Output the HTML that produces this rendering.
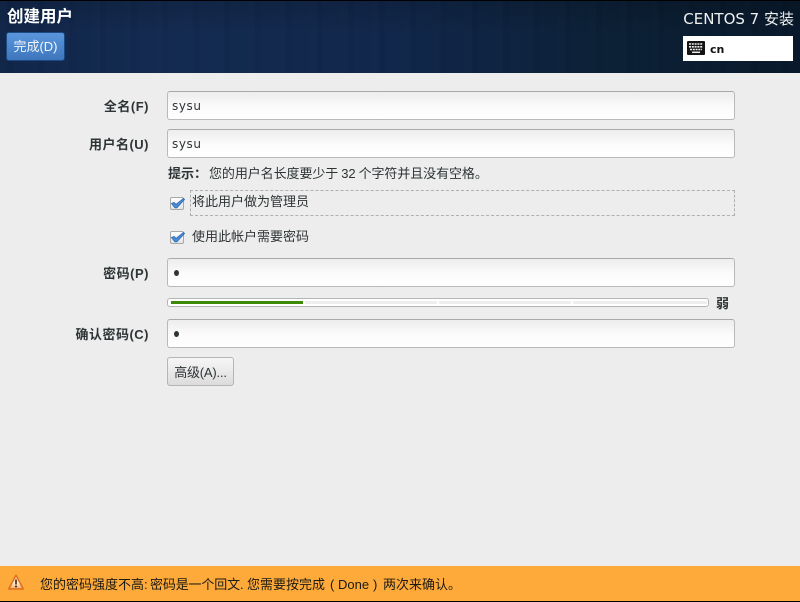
<!DOCTYPE html>
<html lang="zh">
<head>
<meta charset="utf-8">
<title>创建用户</title>
<style>
html,body{margin:0;padding:0;width:800px;height:602px;overflow:hidden;background:#ededed;}
body{position:relative;font-family:"Liberation Sans","WenQuanYi Zen Hei","Noto Sans CJK SC",sans-serif;font-size:13px;color:#2e3436;}
div{position:absolute;box-sizing:border-box;white-space:nowrap;}
#hdr{left:0;top:0;width:800px;height:73px;border-top:1px solid #000;
background:
repeating-linear-gradient(90deg,rgba(255,255,255,.008) 0 7px,rgba(0,0,0,.025) 7px 13px,rgba(255,255,255,.005) 13px 31px),
linear-gradient(rgba(0,0,0,.14),rgba(0,0,0,0) 45%),
linear-gradient(90deg,#10264a 0%,#132a50 22%,#10264a 50%,#0b2036 75%,#08182a 100%);}
.lbl{right:651px;font-weight:bold;font-size:13px;line-height:16px;color:#2e3436;text-align:right;letter-spacing:.5px;}
.inp{left:167px;width:568px;height:29px;border:1px solid #b9b9b6;border-top-color:#a9a9a6;border-radius:3px;
background:linear-gradient(#ededed,#fbfbfb 55%,#fff);font-family:"DejaVu Sans",sans-serif;font-size:12px;line-height:29px;padding-left:4px;color:#2e3436;letter-spacing:.6px;}
.chk{left:170px;width:14px;height:13px;border:1px solid #a8a8a8;border-radius:2px;background:linear-gradient(#fff,#e4e4e4);}
.chk svg{position:absolute;left:-1px;top:-2px;}
.t{font-size:13px;line-height:16px;}
.f{top:577px;font-size:13px;line-height:16px;color:#1d1a12;}
.dot{position:absolute;left:6px;top:11px;width:5px;height:6px;border-radius:50%;background:#2e3436;}
</style>
</head>
<body>
<div id="hdr"></div>
<div style="left:7px;top:7px;color:#fff;font-size:16.500px;font-weight:bold;line-height:20px;">创建用户</div>
<div style="left:6px;top:32px;width:59px;height:29px;border:1px solid #1d4a80;border-radius:3px;background:linear-gradient(#5b96dc,#3d76bd);color:#f2f6fb;font-size:13px;line-height:27px;text-align:center;">完成(D)</div>
<div style="right:6px;top:10px;color:#f0f0f0;font-family:'DejaVu Sans','WenQuanYi Zen Hei',sans-serif;font-size:15px;line-height:19px;">CENTOS 7 安装</div>
<div style="left:683px;top:36px;width:110px;height:25px;background:#fff;"></div>
<svg style="position:absolute;left:687px;top:41px" width="18" height="14" viewBox="0 0 18 14">
<rect x="0" y="0" width="18" height="14" rx="1" fill="#141414"/>
<path d="M2 3h14M2 5.800h14M3 8.500h12" stroke="#eeeeee" stroke-width="1.600" stroke-dasharray="2 .8"/>
<path d="M5 11.300h8" stroke="#eeeeee" stroke-width="1.500"/>
</svg>
<div style="left:710px;top:42px;color:#111;font-family:'DejaVu Sans',sans-serif;font-size:11px;font-weight:bold;line-height:15px;">cn</div>

<div class="lbl" style="top:99px;">全名(F)</div>
<div class="inp" style="top:91px;">sysu</div>
<div class="lbl" style="top:137px;">用户名(U)</div>
<div class="inp" style="top:129px;">sysu</div>

<div class="t" style="left:168px;top:166px;"><b>提示：</b></div>
<div class="t" style="left:209px;top:166px;word-spacing:-.5px;letter-spacing:-.08px;">您的用户名长度要少于 32 个字符并且没有空格。</div>

<div style="left:190px;top:190px;width:545px;height:26px;border:1px dashed #b0b0b0;"></div>
<div class="chk" style="top:197px;"><svg width="16" height="16" viewBox="0 0 16 16"><path d="M1.500 7.500L4 6.500L6 8.500L13.500 2.500L14.500 3.500L6.800 11.800H5Z" fill="#4a8fdc" stroke="#2f6db5" stroke-width=".9" stroke-linejoin="round"/></svg></div>
<div class="t" style="left:192px;top:194px;">将此用户做为管理员</div>
<div class="chk" style="top:231px;"><svg width="16" height="16" viewBox="0 0 16 16"><path d="M1.500 7.500L4 6.500L6 8.500L13.500 2.500L14.500 3.500L6.800 11.800H5Z" fill="#4a8fdc" stroke="#2f6db5" stroke-width=".9" stroke-linejoin="round"/></svg></div>
<div class="t" style="left:192px;top:229px;">使用此帐户需要密码</div>

<div class="lbl" style="top:266px;">密码(P)</div>
<div class="inp" style="top:258px;"><span class="dot"></span></div>

<div style="left:167px;top:298px;width:542px;height:9px;border:1px solid #b5b5b2;border-radius:3px;background:#fff;"></div>
<div style="left:171px;top:301px;width:132px;height:3px;background:#3e8a04;"></div>
<div style="left:305px;top:301px;width:132px;height:3px;background:#eeeeee;"></div>
<div style="left:439px;top:301px;width:132px;height:3px;background:#eeeeee;"></div>
<div style="left:573px;top:301px;width:134px;height:3px;background:#eeeeee;"></div>
<div style="left:716px;top:296px;font-size:13px;font-weight:bold;line-height:16px;">弱</div>

<div class="lbl" style="top:327px;">确认密码(C)</div>
<div class="inp" style="top:319px;"><span class="dot"></span></div>

<div style="left:167px;top:357px;width:67px;height:29px;border:1px solid #b5b5b2;border-radius:3px;background:linear-gradient(#f6f6f6,#dcdcdc);font-size:13px;line-height:29px;text-align:center;letter-spacing:-.2px;">高级(A)...</div>

<div style="left:0;top:566px;width:800px;height:35px;background:#fdaa3b;"></div>
<div style="left:0;top:601px;width:800px;height:1px;background:#000;"></div>
<svg style="position:absolute;left:8px;top:574px" width="16" height="16" viewBox="0 0 16 16">
<defs><linearGradient id="w" x1="0" y1="0" x2="0" y2="1"><stop offset="0" stop-color="#f7c48e"/><stop offset=".55" stop-color="#fff0df"/><stop offset="1" stop-color="#f6a55e"/></linearGradient></defs>
<path d="M8 1.200L15.200 15H.8Z" fill="url(#w)" stroke="#dd6f18" stroke-width="1.500" stroke-linejoin="round"/>
<path d="M8 5.500V10.500" stroke="#5d3312" stroke-width="1.800"/><path d="M8 11.700V13.300" stroke="#2e1a08" stroke-width="1.800"/>
</svg>
<div class="f" style="left:40px;">您的密码强度不高:</div>
<div class="f" style="left:150px;letter-spacing:-.15px;">密码是一个回文.</div>
<div class="f" style="left:247px;">您需要按完成</div>
<div class="f" style="left:330px;">(</div>
<div class="f" style="left:338px;">Done</div>
<div class="f" style="left:373px;">)</div>
<div class="f" style="left:383px;">两次来确认。</div>
</body>
</html>
